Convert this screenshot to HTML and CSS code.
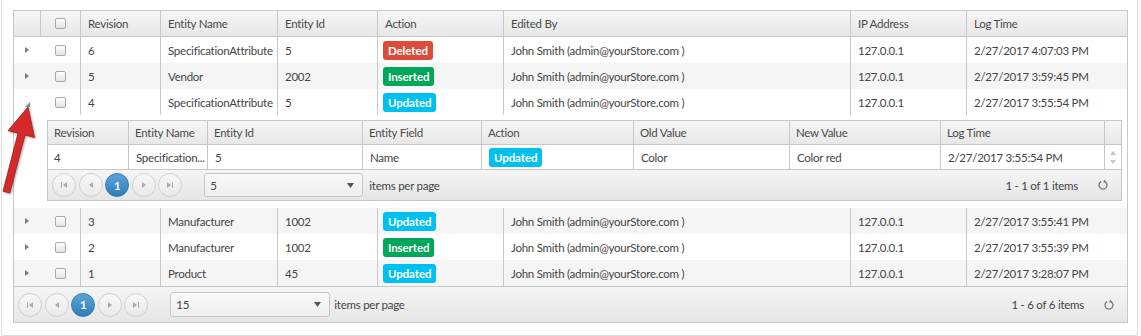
FILE: index.html
```html
<!DOCTYPE html>
<html>
<head>
<meta charset="utf-8">
<link rel="stylesheet" href="styles.css">
</head>
<body>
<div class="panel">
  <div class="grid main-grid">
    <table class="tbl">
      <colgroup>
        <col class="m-exp"><col class="m-cb"><col class="m-rev"><col class="m-name"><col class="m-id"><col class="m-act"><col class="m-by"><col class="m-ip"><col class="m-time">
      </colgroup>
      <thead>
        <tr>
          <th class="exp first"></th>
          <th class="cbc"><span class="cb"></span></th>
          <th>Revision</th>
          <th>Entity Name</th>
          <th>Entity Id</th>
          <th>Action</th>
          <th>Edited By</th>
          <th>IP Address</th>
          <th>Log Time</th>
        </tr>
      </thead>
      <tbody>
        <tr>
          <td class="exp"><svg class="tri" width="4" height="6" viewBox="0 0 4 6"><polygon points="0,0 4,3 0,6"/></svg></td>
          <td class="cbc"><span class="cb"></span></td>
          <td class="bl">6</td><td class="bl">SpecificationAttribute</td><td class="bl">5</td>
          <td class="bl act"><span class="badge red">Deleted</span></td>
          <td class="bl">John Smith (admin@yourStore.com )</td><td class="bl">127.0.0.1</td><td class="bl">2/27/2017 4:07:03 PM</td>
        </tr>
        <tr class="alt">
          <td class="exp"><svg class="tri" width="4" height="6" viewBox="0 0 4 6"><polygon points="0,0 4,3 0,6"/></svg></td>
          <td class="cbc"><span class="cb"></span></td>
          <td class="bl">5</td><td class="bl">Vendor</td><td class="bl">2002</td>
          <td class="bl act"><span class="badge green">Inserted</span></td>
          <td class="bl">John Smith (admin@yourStore.com )</td><td class="bl">127.0.0.1</td><td class="bl">2/27/2017 3:59:45 PM</td>
        </tr>
        <tr>
          <td class="exp"><svg class="tri open" width="5" height="5" viewBox="0 0 5 5"><polygon points="5,0 5,5 0,5"/></svg></td>
          <td class="cbc"><span class="cb"></span></td>
          <td class="bl">4</td><td class="bl">SpecificationAttribute</td><td class="bl">5</td>
          <td class="bl act"><span class="badge blue">Updated</span></td>
          <td class="bl">John Smith (admin@yourStore.com )</td><td class="bl">127.0.0.1</td><td class="bl">2/27/2017 3:55:54 PM</td>
        </tr>
        <tr class="detail">
          <td class="exp"></td>
          <td class="dcell" colspan="8">
            <div class="grid sub-grid">
              <table class="tbl">
                <colgroup>
                  <col class="s-rev"><col class="s-name"><col class="s-id"><col class="s-field"><col class="s-act"><col class="s-old"><col class="s-new"><col class="s-time"><col class="s-scroll">
                </colgroup>
                <thead>
                  <tr>
                    <th class="first">Revision</th>
                    <th>Entity Name</th>
                    <th>Entity Id</th>
                    <th>Entity Field</th>
                    <th>Action</th>
                    <th>Old Value</th>
                    <th>New Value</th>
                    <th>Log Time</th>
                    <th></th>
                  </tr>
                </thead>
                <tbody>
                  <tr>
                    <td>4</td>
                    <td class="bl">Specification...</td>
                    <td class="bl">5</td>
                    <td class="bl">Name</td>
                    <td class="bl act"><span class="badge blue">Updated</span></td>
                    <td class="bl">Color</td>
                    <td class="bl">Color red</td>
                    <td class="bl">2/27/2017 3:55:54 PM</td>
                    <td class="bl scroll">
                      <span class="sarrows">
                        <svg width="6" height="4" viewBox="0 0 6 4"><polygon points="3,0 6,4 0,4"/></svg>
                        <svg width="6" height="4" viewBox="0 0 6 4"><polygon points="0,0 6,0 3,4"/></svg>
                      </span>
                    </td>
                  </tr>
                </tbody>
              </table>
              <div class="pager small">
                <span class="pbtn"><svg width="6" height="6" viewBox="0 0 6 6"><rect x="0" y="0" width="1" height="6"/><polygon points="6,0 6,6 2,3"/></svg></span>
                <span class="pbtn"><svg width="6" height="6" viewBox="0 0 6 6"><polygon points="5,0 5,6 1,3"/></svg></span>
                <span class="pbtn cur">1</span>
                <span class="pbtn"><svg width="6" height="6" viewBox="0 0 6 6"><polygon points="1,0 1,6 5,3"/></svg></span>
                <span class="pbtn"><svg width="6" height="6" viewBox="0 0 6 6"><polygon points="0,0 0,6 4,3"/><rect x="5" y="0" width="1" height="6"/></svg></span>
                <span class="dd"><span>5</span><svg width="7" height="5" viewBox="0 0 7 5"><polygon points="0,0 7,0 3.5,5"/></svg></span>
                <span class="ipp">items per page</span>
                <span class="info">1 - 1 of 1 items</span>
                <svg class="refresh" width="12" height="12" viewBox="0 0 12 12"><path d="M4.2 2.6 A4 4 0 1 0 7.8 2.6" /><polygon points="7.2,0.6 9.4,3.2 6.2,3.6"/></svg>
              </div>
            </div>
          </td>
        </tr>
        <tr class="alt">
          <td class="exp"><svg class="tri" width="4" height="6" viewBox="0 0 4 6"><polygon points="0,0 4,3 0,6"/></svg></td>
          <td class="cbc"><span class="cb"></span></td>
          <td class="bl">3</td><td class="bl">Manufacturer</td><td class="bl">1002</td>
          <td class="bl act"><span class="badge blue">Updated</span></td>
          <td class="bl">John Smith (admin@yourStore.com )</td><td class="bl">127.0.0.1</td><td class="bl">2/27/2017 3:55:41 PM</td>
        </tr>
        <tr>
          <td class="exp"><svg class="tri" width="4" height="6" viewBox="0 0 4 6"><polygon points="0,0 4,3 0,6"/></svg></td>
          <td class="cbc"><span class="cb"></span></td>
          <td class="bl">2</td><td class="bl">Manufacturer</td><td class="bl">1002</td>
          <td class="bl act"><span class="badge green">Inserted</span></td>
          <td class="bl">John Smith (admin@yourStore.com )</td><td class="bl">127.0.0.1</td><td class="bl">2/27/2017 3:55:39 PM</td>
        </tr>
        <tr class="alt">
          <td class="exp"><svg class="tri" width="4" height="6" viewBox="0 0 4 6"><polygon points="0,0 4,3 0,6"/></svg></td>
          <td class="cbc"><span class="cb"></span></td>
          <td class="bl">1</td><td class="bl">Product</td><td class="bl">45</td>
          <td class="bl act"><span class="badge blue">Updated</span></td>
          <td class="bl">John Smith (admin@yourStore.com )</td><td class="bl">127.0.0.1</td><td class="bl">2/27/2017 3:28:07 PM</td>
        </tr>
      </tbody>
    </table>
    <div class="pager">
      <span class="pbtn"><svg width="6" height="6" viewBox="0 0 6 6"><rect x="0" y="0" width="1" height="6"/><polygon points="6,0 6,6 2,3"/></svg></span>
      <span class="pbtn"><svg width="6" height="6" viewBox="0 0 6 6"><polygon points="5,0 5,6 1,3"/></svg></span>
      <span class="pbtn cur">1</span>
      <span class="pbtn"><svg width="6" height="6" viewBox="0 0 6 6"><polygon points="1,0 1,6 5,3"/></svg></span>
      <span class="pbtn"><svg width="6" height="6" viewBox="0 0 6 6"><polygon points="0,0 0,6 4,3"/><rect x="5" y="0" width="1" height="6"/></svg></span>
      <span class="dd"><span>15</span><svg width="7" height="5" viewBox="0 0 7 5"><polygon points="0,0 7,0 3.5,5"/></svg></span>
      <span class="ipp">items per page</span>
      <span class="info">1 - 6 of 6 items</span>
      <svg class="refresh" width="12" height="12" viewBox="0 0 12 12"><path d="M4.2 2.6 A4 4 0 1 0 7.8 2.6" /><polygon points="7.2,0.6 9.4,3.2 6.2,3.6"/></svg>
    </div>
  </div>
  <svg class="red-arrow" width="40" height="200" viewBox="0 0 40 200">
    <polygon points="27,107 33.5,137.5 24,135 8.8,193 2,191.2 17,133.2 7,130.6"/>
  </svg>
</div>
</body>
</html>
```

FILE: styles.css
```css
* { box-sizing: border-box; }

body {
  margin: 0;
  background: #fff;
  font-family: Lato, "Noto Sans", sans-serif;
  font-size: 11.5px;
  letter-spacing: -0.25px;
  color: #444;
}

.panel {
  position: relative;
  width: 1137px;
  height: 336px;
  margin-left: 1px;
  padding: 10px 9px 0 11px;
  border: 1px solid #dcdcdc;
  border-top: none;
  border-radius: 0 0 3px 3px;
}

.grid {
  border: 1px solid #c8c8c8;
  background: #fff;
}

.tbl {
  width: 100%;
  border-collapse: separate;
  border-spacing: 0;
  table-layout: fixed;
}

/* main columns */
.m-exp { width: 26px; }
.m-cb { width: 40px; }
.m-rev { width: 80px; }
.m-name { width: 117px; }
.m-id { width: 100px; }
.m-act { width: 126px; }
.m-by { width: 347px; }
.m-ip { width: 116px; }
.m-time { width: 161px; }

/* sub columns */
.s-rev { width: 80px; }
.s-name { width: 79px; }
.s-id { width: 155px; }
.s-field { width: 119px; }
.s-act { width: 152px; }
.s-old { width: 156px; }
.s-new { width: 151px; }
.s-time { width: 164px; }
.s-scroll { width: 17px; }

th {
  height: 26px;
  padding: 0 7px;
  text-align: left;
  font-weight: normal;
  color: #4a4a4a;
  background: linear-gradient(#f6f6f6, #e7e7e7);
  border-bottom: 1px solid #c8c8c8;
  border-left: 1px solid #c8c8c8;
  white-space: nowrap;
}
th.first { border-left: none; }

td {
  height: 26px;
  padding: 0 7px;
  white-space: nowrap;
  overflow: hidden;
  vertical-align: middle;
}
td.bl { border-left: 1px solid #c8c8c8; }
td.act { padding-left: 5px; }

tr.alt td { background: #f5f5f5; }

.exp, .cbc { padding: 0; text-align: center; }
.tri { display: block; margin: 0 auto; fill: #7a7a7a; }
.tri.open { margin: 4px 0 0 11px; fill: #8a8a8a; }

.cb {
  display: block;
  width: 11px;
  height: 11px;
  margin: 0 auto;
  border: 1px solid #a9a9a9;
  border-radius: 2px;
  background: linear-gradient(#fdfdfd, #e4e4e4);
}

.badge {
  display: inline-block;
  padding: 3px 5px;
  line-height: 13px;
  border-radius: 3px;
  color: #fff;
  font-weight: bold;
  letter-spacing: -0.1px;
}
.red { background: #dd4b39; }
.green { background: #00a65a; }
.blue { background: #00c0ef; }

.detail td { background: #fff; }
td.dcell {
  height: 93px;
  padding: 5px 5px 7px 7px;
  vertical-align: top;
  overflow: visible;
}

.sub-grid th { height: 24px; padding: 0 6px; }
.sub-grid td { height: 24px; padding: 0 7px; }
.sub-grid td:first-child { padding-left: 6px; }
.sub-grid td.act { padding-left: 7px; }
.sub-grid td.scroll { padding: 0; }
.sarrows {
  display: flex;
  flex-direction: column;
  align-items: center;
  gap: 5px;
  fill: #c4c4c4;
}
.sarrows svg { display: block; }

.pager {
  display: flex;
  align-items: center;
  height: 36px;
  padding: 0 12px 0 4px;
  border-top: 1px solid #c8c8c8;
  background: linear-gradient(#f5f5f5, #e6e6e6);
  color: #444;
}
.pager.small { height: 31px; }

.pbtn {
  display: flex;
  align-items: center;
  justify-content: center;
  width: 24px;
  height: 24px;
  margin-right: 2.6px;
  border: 1px solid #cfcfcf;
  border-radius: 50%;
  background: linear-gradient(#f8f8f8, #e9e9e9);
  fill: #aaaaaa;
}
.pbtn.cur {
  border-color: #2f7db5;
  background: linear-gradient(#5aa5d6, #2f7db8);
  color: #fff;
  font-weight: bold;
}

.dd {
  display: flex;
  align-items: center;
  justify-content: space-between;
  width: 160px;
  height: 25px;
  margin-left: 19.4px;
  padding: 0 8px 0 5px;
  border: 1px solid #c6c6c6;
  border-radius: 3px;
  background: linear-gradient(#f9f9f9, #eeeeee);
  fill: #555;
}
.pager.small .dd { width: 159px; height: 24px; }

.ipp { margin-left: 4px; }
.pager.small .ipp { margin-left: 6px; }

.info { margin-left: auto; margin-right: 19px; }

.refresh {
  display: block;
  fill: #777;
  stroke: #777;
  stroke-width: 1.3;
}
.refresh path { fill: none; }
.refresh polygon { stroke: none; }

.red-arrow {
  position: absolute;
  left: -1px;
  top: 0;
  fill: #d62a2a;
  stroke: #9e1a1a;
  stroke-width: 0.8;
  stroke-linejoin: round;
  filter: drop-shadow(1px 1px 1px rgba(0,0,0,0.35));
}
```
